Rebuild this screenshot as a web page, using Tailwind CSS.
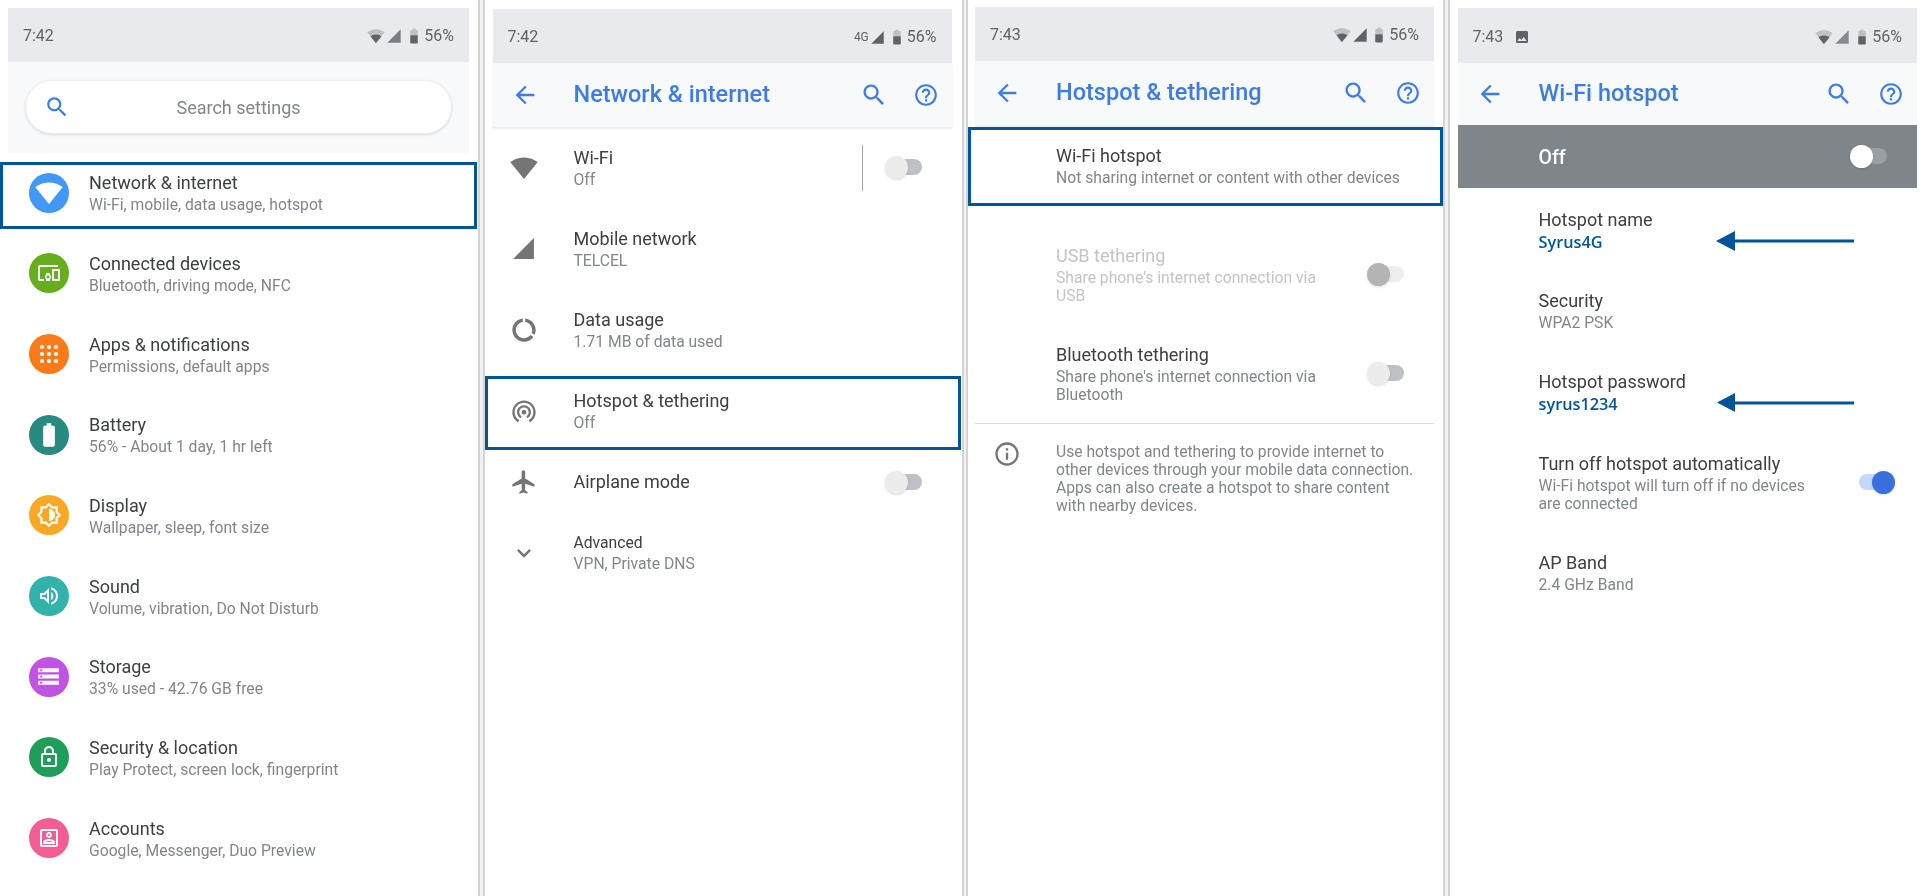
<!DOCTYPE html>
<html lang="en">
<head>
<meta charset="utf-8">
<title>Settings</title>
<script src="https://cdn.jsdelivr.net/npm/@tailwindcss/browser@4"></script>
</head>
<body class="bg-white">
<svg class="hidden">
  <symbol id="wifi" viewBox="0 0 24 24"><path d="M12.01 21.49L23.64 7c-.45-.34-4.93-4-11.64-4C5.28 3 .81 6.66.36 7l11.64 14.49z"/></symbol>
  <symbol id="wifi2" viewBox="0 0 24 24"><path fill-opacity=".3" d="M12.01 21.49L23.64 7c-.45-.34-4.93-4-11.64-4C5.28 3 .81 6.66.36 7l11.64 14.49z"/><path d="M4.79 12.52l7.2 8.98H12l.01-.01 7.2-8.98C18.85 12.24 16.1 10 12 10s-6.85 2.24-7.21 2.52z"/></symbol>
  <symbol id="sig" viewBox="0 0 24 24"><path d="M2 22h20V2z"/></symbol>
  <symbol id="batt2" viewBox="0 0 24 24"><path fill-opacity=".3" d="M15.67 4H14V2h-4v2H8.33C7.6 4 7 4.6 7 5.33V11h10V5.33C17 4.6 16.4 4 15.67 4z"/><path d="M7 11v9.67C7 21.4 7.6 22 8.33 22h7.33c.74 0 1.34-.6 1.34-1.33V11H7z"/></symbol>
  <symbol id="batt" viewBox="0 0 24 24"><path d="M15.67 4H14V2h-4v2H8.33C7.6 4 7 4.6 7 5.33v15.33C7 21.4 7.6 22 8.33 22h7.33c.74 0 1.34-.6 1.34-1.33V5.33C17 4.6 16.4 4 15.67 4z"/></symbol>
  <symbol id="search" viewBox="0 0 24 24"><path d="M15.5 14h-.79l-.28-.27C15.41 12.59 16 11.11 16 9.5 16 5.91 13.09 3 9.5 3S3 5.91 3 9.5 5.91 16 9.5 16c1.61 0 3.09-.59 4.23-1.57l.27.28v.79l5 4.99L20.49 19l-4.99-5zm-6 0C7.01 14 5 11.99 5 9.5S7.01 5 9.5 5 14 7.01 14 9.5 11.99 14 9.5 14z"/></symbol>
  <symbol id="back" viewBox="0 0 24 24"><path d="M20 11H7.83l5.59-5.59L12 4l-8 8 8 8 1.41-1.41L7.83 13H20v-2z"/></symbol>
  <symbol id="help" viewBox="0 0 24 24"><path d="M11 18h2v-2h-2v2zm1-16C6.48 2 2 6.48 2 12s4.48 10 10 10 10-4.48 10-10S17.52 2 12 2zm0 18c-4.41 0-8-3.59-8-8s3.59-8 8-8 8 3.59 8 8-3.59 8-8 8zm0-14c-2.21 0-4 1.79-4 4h2c0-1.1.9-2 2-2s2 .9 2 2c0 2-3 1.75-3 5h2c0-2.25 3-2.5 3-5 0-2.21-1.79-4-4-4z"/></symbol>
</svg>

<div class="relative flex w-[1927px] h-[896px] overflow-hidden bg-white font-[family-name:Roboto,sans-serif] blur-[0.4px]">

  <!-- Pane 1 -->
  <section class="w-[478px] shrink-0 pl-2 pr-[9px] pt-2">
    <div class="flex h-[54px] items-center justify-between bg-[#e8eaed] pl-[15px] pr-[15px] pt-[2px] text-[#5f6368]">
      <span class="text-base">7:42</span>
      <div class="flex items-center">
        <svg class="size-[18px] fill-current"><use href="#wifi2"/></svg>
        <svg class="ml-px size-[16px] fill-current opacity-80"><use href="#sig"/></svg>
        <svg class="ml-[3px] size-[18px] fill-current"><use href="#batt2"/></svg>
        <span class="ml-px text-base">56%</span>
      </div>
    </div>
    <div class="h-[90.5px] bg-[#f8f9fa] px-[17px] pt-[18px]">
      <div class="relative flex h-[54px] items-center justify-center rounded-full border border-[#eceef0] bg-white shadow-sm">
        <svg class="absolute left-[18px] size-[26px] fill-[#3d7ce6]"><use href="#search"/></svg>
        <span class="text-[18px] text-[#80868b]">Search settings</span>
      </div>
    </div>
    <div class="flex h-[80.67px] items-center">
      <div class="flex w-[81px] justify-center"><span class="flex size-10 items-center justify-center rounded-full bg-[#4299f5]"><svg class="size-[28px] fill-white"><use href="#wifi"/></svg></span></div>
      <div><div class="text-[18px] leading-6 text-[#3c4043]">Network &amp; internet</div><div class="mt-px text-[15.7px] leading-[18px] text-[#80868b]">Wi-Fi, mobile, data usage, hotspot</div></div>
    </div>
    <div class="flex h-[80.67px] items-center">
      <div class="flex w-[81px] justify-center"><span class="flex size-10 items-center justify-center rounded-full bg-[#66ae1e]"><svg class="size-6 fill-white" viewBox="0 0 24 24"><path d="M3 6h18V4H3c-1.1 0-2 .9-2 2v12c0 1.1.9 2 2 2h4v-2H3V6zm10 6H9v1.78c-.61.55-1 1.33-1 2.22s.39 1.67 1 2.22V20h4v-1.78c.61-.55 1-1.34 1-2.22s-.39-1.67-1-2.22V12zm-2 5.5c-.83 0-1.5-.67-1.5-1.5s.67-1.5 1.5-1.5 1.5.67 1.5 1.5-.67 1.5-1.5 1.5zM22 8h-6c-.5 0-1 .5-1 1v10c0 .5.5 1 1 1h6c.5 0 1-.5 1-1V9c0-.5-.5-1-1-1zm-1 10h-4v-8h4v8z"/></svg></span></div>
      <div><div class="text-[18px] leading-6 text-[#3c4043]">Connected devices</div><div class="mt-px text-[15.7px] leading-[18px] text-[#80868b]">Bluetooth, driving mode, NFC</div></div>
    </div>
    <div class="flex h-[80.67px] items-center">
      <div class="flex w-[81px] justify-center"><span class="flex size-10 items-center justify-center rounded-full bg-[#fa7b17]"><svg class="size-6 fill-white" viewBox="0 0 24 24"><circle cx="5" cy="5" r="2.1"/><circle cx="12" cy="5" r="2.1"/><circle cx="19" cy="5" r="2.1"/><circle cx="5" cy="12" r="2.1"/><circle cx="12" cy="12" r="2.1"/><circle cx="19" cy="12" r="2.1"/><circle cx="5" cy="19" r="2.1"/><circle cx="12" cy="19" r="2.1"/><circle cx="19" cy="19" r="2.1"/></svg></span></div>
      <div><div class="text-[18px] leading-6 text-[#3c4043]">Apps &amp; notifications</div><div class="mt-px text-[15.7px] leading-[18px] text-[#80868b]">Permissions, default apps</div></div>
    </div>
    <div class="flex h-[80.67px] items-center">
      <div class="flex w-[81px] justify-center"><span class="flex size-10 items-center justify-center rounded-full bg-[#288a80]"><svg class="size-[28px] fill-white"><use href="#batt"/></svg></span></div>
      <div><div class="text-[18px] leading-6 text-[#3c4043]">Battery</div><div class="mt-px text-[15.7px] leading-[18px] text-[#80868b]">56% - About 1 day, 1 hr left</div></div>
    </div>
    <div class="flex h-[80.67px] items-center">
      <div class="flex w-[81px] justify-center"><span class="flex size-10 items-center justify-center rounded-full bg-[#f9a825]"><svg class="size-[26px] fill-white" viewBox="0 0 24 24"><path d="M20 15.31L23.31 12 20 8.69V4h-4.69L12 .69 8.69 4H4v4.69L.69 12 4 15.31V20h4.69L12 23.31 15.31 20H20v-4.69zm-2-.83V18h-3.52L12 20.48 9.52 18H6v-3.52L3.52 12 6 9.52V6h3.52L12 3.52 14.48 6H18v3.52L20.48 12 18 14.48zM12 6.5v11c3.03 0 5.5-2.47 5.5-5.5S15.03 6.5 12 6.5z"/></svg></span></div>
      <div><div class="text-[18px] leading-6 text-[#3c4043]">Display</div><div class="mt-px text-[15.7px] leading-[18px] text-[#80868b]">Wallpaper, sleep, font size</div></div>
    </div>
    <div class="flex h-[80.67px] items-center">
      <div class="flex w-[81px] justify-center"><span class="flex size-10 items-center justify-center rounded-full bg-[#31b3ab]"><svg class="size-6 fill-white" viewBox="0 0 24 24"><path d="M3 9v6h4l5 5V4L7 9H3zm7-.17v6.34L7.83 13H5v-2h2.83L10 8.83zM16.5 12c0-1.77-1.02-3.29-2.5-4.03v8.05c1.48-.73 2.5-2.25 2.5-4.02zM14 3.23v2.06c2.89.86 5 3.54 5 6.71s-2.11 5.85-5 6.71v2.06c4.01-.91 7-4.49 7-8.77 0-4.28-2.99-7.86-7-8.77z"/></svg></span></div>
      <div><div class="text-[18px] leading-6 text-[#3c4043]">Sound</div><div class="mt-px text-[15.7px] leading-[18px] text-[#80868b]">Volume, vibration, Do Not Disturb</div></div>
    </div>
    <div class="flex h-[80.67px] items-center">
      <div class="flex w-[81px] justify-center"><span class="flex size-10 items-center justify-center rounded-full bg-[#c052e4]"><svg class="size-[25px] fill-white" viewBox="0 0 24 24"><path d="M2 20h20v-4H2v4zm2-3h2v2H4v-2zM2 4v4h20V4H2zm4 3H4V5h2v2zm-4 7h20v-4H2v4zm2-3h2v2H4v-2z"/></svg></span></div>
      <div><div class="text-[18px] leading-6 text-[#3c4043]">Storage</div><div class="mt-px text-[15.7px] leading-[18px] text-[#80868b]">33% used - 42.76 GB free</div></div>
    </div>
    <div class="flex h-[80.67px] items-center">
      <div class="flex w-[81px] justify-center"><span class="flex size-10 items-center justify-center rounded-full bg-[#1e9e5a]"><svg class="size-6 fill-white" viewBox="0 0 24 24"><path d="M12 17c1.1 0 2-.9 2-2s-.9-2-2-2-2 .9-2 2 .9 2 2 2zm6-9h-1V6c0-2.76-2.24-5-5-5S7 3.24 7 6v2H6c-1.1 0-2 .9-2 2v10c0 1.1.9 2 2 2h12c1.1 0 2-.9 2-2V10c0-1.1-.9-2-2-2zM8.9 6c0-1.71 1.39-3.1 3.1-3.1s3.1 1.39 3.1 3.1v2H8.9V6zM18 20H6V10h12v10z"/></svg></span></div>
      <div><div class="text-[18px] leading-6 text-[#3c4043]">Security &amp; location</div><div class="mt-px text-[15.7px] leading-[18px] text-[#80868b]">Play Protect, screen lock, fingerprint</div></div>
    </div>
    <div class="flex h-[80.67px] items-center">
      <div class="flex w-[81px] justify-center"><span class="flex size-10 items-center justify-center rounded-full bg-[#f25e94]"><svg class="size-6 fill-white" viewBox="0 0 24 24"><path d="M19 3H5c-1.1 0-2 .9-2 2v14c0 1.1.9 2 2 2h14c1.1 0 2-.9 2-2V5c0-1.1-.9-2-2-2zm0 16H5V5h14v14zM12 12c1.66 0 3-1.34 3-3s-1.34-3-3-3-3 1.34-3 3 1.34 3 3 3zm0-4c.55 0 1 .45 1 1s-.45 1-1 1-1-.45-1-1 .45-1 1-1zm6 8.58c0-2.5-3.97-3.58-6-3.58s-6 1.08-6 3.58V18h12v-1.42zM8.48 16c.74-.51 2.23-1 3.52-1s2.78.49 3.52 1H8.48z"/></svg></span></div>
      <div><div class="text-[18px] leading-6 text-[#3c4043]">Accounts</div><div class="mt-px text-[15.7px] leading-[18px] text-[#80868b]">Google, Messenger, Duo Preview</div></div>
    </div>
  </section>

  <div class="w-[6.5px] shrink-0 border-x-2 border-x-[#d4d4d4] bg-[#f1f1f1]"></div>

  <!-- Pane 2 -->
  <section class="w-[477px] shrink-0 pl-2 pr-[10px] pt-[9px]">
    <div class="flex h-[54px] items-center justify-between bg-[#e8eaed] pl-[15px] pr-[15px] pt-[2px] text-[#5f6368]">
      <span class="text-base">7:42</span>
      <div class="flex items-center">
        <span class="text-[12px]">4G</span>
        <svg class="ml-px size-[15px] fill-current"><use href="#sig"/></svg>
        <svg class="ml-[3px] size-[18px] fill-current"><use href="#batt2"/></svg>
        <span class="ml-px text-base">56%</span>
      </div>
    </div>
    <header class="flex h-[64px] items-center bg-[#f8f9fa] pr-[13px] shadow-[0_2px_2px_rgba(0,0,0,0.08)]">
      <div class="w-[81px] pl-[18px]"><svg class="size-[28px] fill-[#3d7ce6]"><use href="#back"/></svg></div>
      <h1 class="flex-1 text-[23.5px] font-medium text-[#3d7ce6]">Network &amp; internet</h1>
      <svg class="size-[28px] fill-[#3d7ce6]"><use href="#search"/></svg>
      <svg class="ml-[25px] size-[26px] fill-[#3d7ce6]"><use href="#help"/></svg>
    </header>
    <div class="flex h-[81px] items-center">
      <div class="w-[81px] pl-[17px]"><svg class="size-[28px] fill-[#757575]"><use href="#wifi"/></svg></div>
      <div class="flex-1"><div class="text-[18px] leading-6 text-[#3c4043]">Wi-Fi</div><div class="mt-px text-[15.7px] leading-[18px] text-[#80868b]">Off</div></div>
      <div class="h-[46px] w-px bg-[#a8a8a8]"></div>
      <div class="relative ml-[22px] mr-[30px] h-[23px] w-[37px]"><div class="absolute left-[3px] right-0 top-[3px] h-[16px] rounded-full bg-[#bdc1c6]"></div><div class="absolute left-0 top-0 size-[23px] rounded-full bg-[#ececec] shadow"></div></div>
    </div>
    <div class="flex h-[81px] items-center">
      <div class="flex w-[81px] pl-[17px]"><span class="flex size-[28px] items-center justify-center"><svg class="size-[25px] fill-[#757575]"><use href="#sig"/></svg></span></div>
      <div><div class="text-[18px] leading-6 text-[#3c4043]">Mobile network</div><div class="mt-px text-[15.7px] leading-[18px] text-[#80868b]">TELCEL</div></div>
    </div>
    <div class="flex h-[81px] items-center">
      <div class="w-[81px] pl-[17px]"><svg class="size-[28px] fill-[#757575]" viewBox="0 0 24 24"><path d="M13 2.05v3.03c3.39.49 6 3.39 6 6.92 0 .9-.18 1.75-.48 2.54l2.6 1.53c.56-1.24.88-2.62.88-4.07 0-5.18-3.95-9.45-9-9.95zM12 19c-3.87 0-7-3.13-7-7 0-3.53 2.61-6.43 6-6.92V2.05c-5.06.5-9 4.76-9 9.95 0 5.52 4.47 10 9.99 10 3.31 0 6.24-1.61 8.06-4.09l-2.6-1.53C16.17 17.98 14.21 19 12 19z"/></svg></div>
      <div><div class="text-[18px] leading-6 text-[#3c4043]">Data usage</div><div class="mt-px text-[15.7px] leading-[18px] text-[#80868b]">1.71 MB of data used</div></div>
    </div>
    <div class="flex h-[81px] items-center">
      <div class="w-[81px] pl-[17px]"><svg class="size-[28px] fill-[#757575]" viewBox="0 0 24 24"><path d="M12 11c-1.1 0-2 .9-2 2s.9 2 2 2 2-.9 2-2-.9-2-2-2zm6 2c0-3.31-2.69-6-6-6s-6 2.69-6 6c0 2.22 1.21 4.15 3 5.19l1-1.74c-1.19-.7-2-1.97-2-3.45 0-2.21 1.79-4 4-4s4 1.79 4 4c0 1.48-.81 2.75-2 3.45l1 1.74c1.79-1.04 3-2.97 3-5.19zM12 3C6.48 3 2 7.48 2 13c0 3.7 2.01 6.92 4.99 8.65l1-1.73C5.61 18.53 4 15.96 4 13c0-4.42 3.58-8 8-8s8 3.58 8 8c0 2.96-1.61 5.53-4 6.92l1 1.73c2.99-1.73 5-4.95 5-8.65 0-5.52-4.48-10-10-10z"/></svg></div>
      <div><div class="text-[18px] leading-6 text-[#3c4043]">Hotspot &amp; tethering</div><div class="mt-px text-[15.7px] leading-[18px] text-[#80868b]">Off</div></div>
    </div>
    <div class="flex h-[62px] items-center">
      <div class="w-[81px] pl-[17px]"><svg class="size-[28px] fill-[#757575]" viewBox="0 0 24 24"><path d="M21 16v-2l-8-5V3.5c0-.83-.67-1.5-1.5-1.5S10 2.67 10 3.5V9l-8 5v2l8-2.5V19l-2 1.5V22l3.5-1 3.5 1v-1.5L13 19v-5.5l8 2.5z"/></svg></div>
      <div class="flex-1 text-[18px] leading-6 text-[#3c4043]">Airplane mode</div>
      <div class="relative mr-[30px] h-[23px] w-[37px]"><div class="absolute left-[3px] right-0 top-[3px] h-[16px] rounded-full bg-[#bdc1c6]"></div><div class="absolute left-0 top-0 size-[23px] rounded-full bg-[#ececec] shadow"></div></div>
    </div>
    <div class="flex h-[80px] items-center">
      <div class="w-[81px] pl-[17px]"><svg class="size-[28px] fill-[#757575]" viewBox="0 0 24 24"><path d="M16.59 8.59L12 13.17 7.41 8.59 6 10l6 6 6-6z"/></svg></div>
      <div><div class="text-[15.7px] leading-[22px] text-[#3c4043]">Advanced</div><div class="text-[15.7px] leading-[20px] text-[#80868b]">VPN, Private DNS</div></div>
    </div>
  </section>

  <div class="w-[6.5px] shrink-0 border-x-2 border-x-[#d4d4d4] bg-[#f1f1f1]"></div>

  <!-- Pane 3 -->
  <section class="w-[475px] shrink-0 pl-[7px] pr-[9px] pt-[7px]">
    <div class="flex h-[54px] items-center justify-between bg-[#e8eaed] pl-[15px] pr-[15px] pt-[2px] text-[#5f6368]">
      <span class="text-base">7:43</span>
      <div class="flex items-center">
        <svg class="size-[18px] fill-current"><use href="#wifi2"/></svg>
        <svg class="ml-px size-[16px] fill-current"><use href="#sig"/></svg>
        <svg class="ml-[2px] size-[18px] fill-current"><use href="#batt2"/></svg>
        <span class="ml-px text-base">56%</span>
      </div>
    </div>
    <header class="flex h-[64px] items-center bg-[#f8f9fa] pr-[13px] shadow-[0_2px_2px_rgba(0,0,0,0.08)]">
      <div class="w-[81px] pl-[18px]"><svg class="size-[28px] fill-[#3d7ce6]"><use href="#back"/></svg></div>
      <h1 class="flex-1 text-[23.5px] font-medium text-[#3d7ce6]">Hotspot &amp; tethering</h1>
      <svg class="size-[28px] fill-[#3d7ce6]"><use href="#search"/></svg>
      <svg class="ml-[25px] size-[26px] fill-[#3d7ce6]"><use href="#help"/></svg>
    </header>
    <div class="h-[81px] pl-[81px] flex flex-col justify-center">
      <div class="text-[18px] leading-6 text-[#3c4043]">Wi-Fi hotspot</div><div class="mt-px text-[15.7px] leading-[18px] text-[#80868b]">Not sharing internet or content with other devices</div>
    </div>
    <div class="mt-[18px] flex h-[100px] items-center pl-[81px]">
      <div class="flex-1"><div class="text-[18px] leading-6 text-[#c2c4c7]">USB tethering</div><div class="mt-px text-[15.7px] leading-[18px] text-[#c2c4c7]">Share phone's internet connection via<br>USB</div></div>
      <div class="relative mr-[30px] h-[23px] w-[37px]"><div class="absolute left-[3px] right-0 top-[3px] h-[16px] rounded-full bg-[#eeeeee]"></div><div class="absolute left-0 top-0 size-[23px] rounded-full bg-[#b4b4b4] shadow"></div></div>
    </div>
    <div class="flex h-[99px] items-center pl-[81px]">
      <div class="flex-1"><div class="text-[18px] leading-6 text-[#3c4043]">Bluetooth tethering</div><div class="mt-px text-[15.7px] leading-[18px] text-[#80868b]">Share phone's internet connection via<br>Bluetooth</div></div>
      <div class="relative mr-[30px] h-[23px] w-[37px]"><div class="absolute left-[3px] right-0 top-[3px] h-[16px] rounded-full bg-[#bdc1c6]"></div><div class="absolute left-0 top-0 size-[23px] rounded-full bg-[#ececec] shadow"></div></div>
    </div>
    <div class="flex border-t border-[#dadce0] pt-[19px]">
      <div class="w-[81px] pl-[18px]"><svg class="size-[28px] -translate-y-[3px] fill-[#757575]" viewBox="0 0 24 24"><path d="M11 7h2v2h-2zm0 4h2v6h-2zm1-9C6.48 2 2 6.48 2 12s4.48 10 10 10 10-4.48 10-10S17.52 2 12 2zm0 18c-4.41 0-8-3.59-8-8s3.59-8 8-8 8 3.59 8 8-3.59 8-8 8z"/></svg></div>
      <p class="whitespace-nowrap text-[15.7px] leading-[18px] text-[#80868b]">Use hotspot and tethering to provide internet to<br>other devices through your mobile data connection.<br>Apps can also create a hotspot to share content<br>with nearby devices.</p>
    </div>
  </section>

  <div class="w-[6.5px] shrink-0 border-x-2 border-x-[#d4d4d4] bg-[#f1f1f1]"></div>

  <!-- Pane 4 -->
  <section class="min-w-0 flex-1 pl-2 pr-[10px] pt-2">
    <div class="flex h-[55px] items-center justify-between bg-[#e8eaed] pl-[15px] pr-[15px] pt-[2px] text-[#5f6368]">
      <div class="flex items-center">
        <span class="text-base">7:43</span>
        <svg class="ml-[11px] size-[16px] fill-current" viewBox="0 0 24 24"><path d="M21 19V5c0-1.1-.9-2-2-2H5c-1.1 0-2 .9-2 2v14c0 1.1.9 2 2 2h14c1.1 0 2-.9 2-2zM8.5 13.5l2.5 3.01L14.5 12l4.5 6H5l3.5-4.5z"/></svg>
      </div>
      <div class="flex items-center">
        <svg class="size-[18px] fill-current"><use href="#wifi2"/></svg>
        <svg class="ml-px size-[16px] fill-current opacity-70"><use href="#sig"/></svg>
        <svg class="ml-[3px] size-[18px] fill-current"><use href="#batt2"/></svg>
        <span class="ml-px text-base">56%</span>
      </div>
    </div>
    <header class="flex h-[62px] items-center bg-[#f8f9fa] pr-[13px]">
      <div class="w-[81px] pl-[18px]"><svg class="size-[28px] fill-[#3d7ce6]"><use href="#back"/></svg></div>
      <h1 class="flex-1 text-[23.5px] font-medium text-[#3d7ce6]">Wi-Fi hotspot</h1>
      <svg class="size-[28px] fill-[#3d7ce6]"><use href="#search"/></svg>
      <svg class="ml-[25px] size-[26px] fill-[#3d7ce6]"><use href="#help"/></svg>
    </header>
    <div class="flex h-[63px] items-center bg-[#80858a] pl-[81px]">
      <div class="flex-1 pt-[2px] text-[19.5px] font-medium text-white">Off</div>
      <div class="relative mr-[30px] h-[23px] w-[37px]"><div class="absolute left-[3px] right-0 top-[3px] h-[16px] rounded-full bg-[#9b9fa3]"></div><div class="absolute left-0 top-0 size-[23px] rounded-full bg-white shadow"></div></div>
    </div>
    <div class="flex h-[82px] flex-col justify-center pl-[81px] pt-px">
      <div class="text-[18px] leading-6 text-[#3c4043]">Hotspot name</div><div class="mt-px font-[family-name:'Open_Sans',sans-serif] text-[16.3px] font-semibold leading-[18px] text-[#00549a]">Syrus4G</div>
    </div>
    <div class="flex h-[81px] flex-col justify-center pl-[81px]">
      <div class="text-[18px] leading-6 text-[#3c4043]">Security</div><div class="mt-px text-[15.7px] leading-[18px] text-[#80868b]">WPA2 PSK</div>
    </div>
    <div class="flex h-[81px] flex-col justify-center pl-[81px]">
      <div class="text-[18px] leading-6 text-[#3c4043]">Hotspot password</div><div class="mt-px font-[family-name:'Open_Sans',sans-serif] text-[16.3px] font-semibold leading-[18px] text-[#00549a]">syrus1234</div>
    </div>
    <div class="flex h-[100px] items-center pl-[81px]">
      <div class="flex-1"><div class="text-[18px] leading-6 text-[#3c4043]">Turn off hotspot automatically</div><div class="mt-px text-[15.7px] leading-[18px] text-[#80868b]">Wi-Fi hotspot will turn off if no devices<br>are connected</div></div>
      <div class="relative mr-[22px] h-[23px] w-[37px]"><div class="absolute inset-x-[1px] top-[3px] h-[16px] rounded-full bg-[#c6d8f8]"></div><div class="absolute right-0 top-0 size-[23px] rounded-full bg-[#3a6fe0] shadow"></div></div>
    </div>
    <div class="flex h-[81px] flex-col justify-center pl-[81px]">
      <div class="text-[18px] leading-6 text-[#3c4043]">AP Band</div><div class="mt-px text-[15.7px] leading-[18px] text-[#80868b]">2.4 GHz Band</div>
    </div>
  </section>

  <!-- Annotations lying over the screens -->
  <div class="absolute left-0 top-[162px] h-[67px] w-[477px] border-[3px] border-[#00549a]"></div>
  <div class="absolute left-[485px] top-[376px] h-[74px] w-[476px] border-[3px] border-[#00549a]"></div>
  <div class="absolute left-[968px] top-[127px] h-[79px] w-[475px] border-[3px] border-[#00549a]"></div>
  <svg class="absolute left-[1716px] top-[231px] h-[20px] w-[138px]" viewBox="0 0 138 20"><path class="fill-[#00549a]" d="M0 10L19 0v20z"/><rect class="fill-[#00549a]" x="18" y="8.5" width="120" height="3"/></svg>
  <svg class="absolute left-[1717px] top-[393px] h-[20px] w-[138px]" viewBox="0 0 138 20"><path class="fill-[#00549a]" d="M0 9.5L18 0v19z"/><rect class="fill-[#00549a]" x="17" y="8.5" width="120" height="3"/></svg>
</div>
</body>
</html>
